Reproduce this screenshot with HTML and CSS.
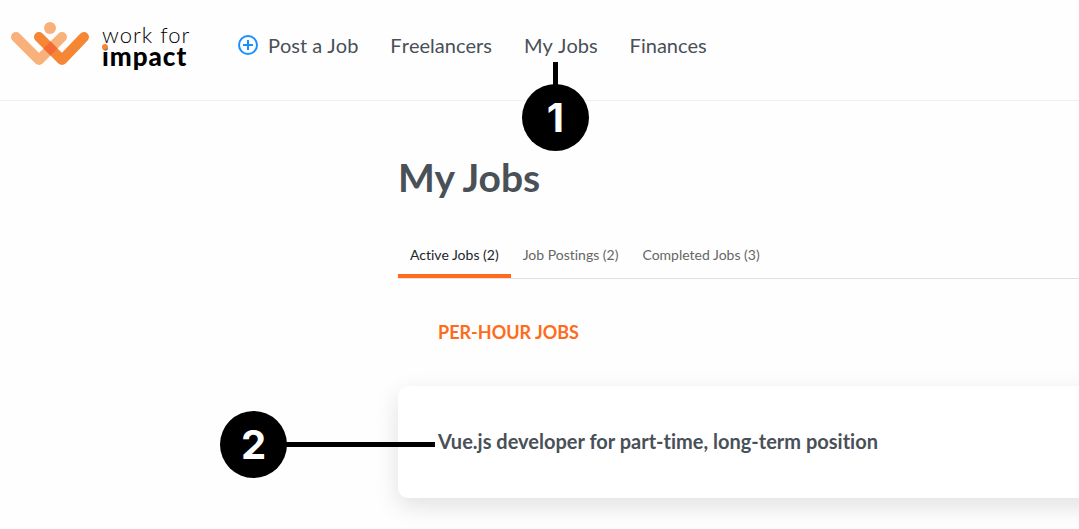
FILE: index.html
```html
<!DOCTYPE html>
<html lang="en">
<head>
    <meta charset="UTF-8">
    <meta name="viewport" content="width=device-width, initial-scale=1.0">
    <title>My Jobs - Work for Impact</title>
    <link rel="stylesheet" href="styles.css">
</head>
<body>
    <header class="header">
        <a class="logo" href="#">
            <svg class="logo-mark" width="80" height="46" viewBox="0 0 80 46" aria-hidden="true">
                <circle cx="40" cy="7" r="6" fill="#f9b17c"/>
                <path d="M6 16L29 39L52 16" fill="none" stroke="#f9b17c" stroke-width="10" stroke-linecap="round" stroke-linejoin="round"/>
                <path d="M29 16L52 39L74 16" fill="none" stroke="#f58634" stroke-width="10" stroke-linecap="round" stroke-linejoin="round"/>
                <path d="M40.500 20.500L47.500 27.500L40.500 34.500L33.500 27.500Z" fill="#f26b35"/>
            </svg>
            <span class="logo-text">
                <span class="logo-light">work for</span>
                <span class="logo-bold">impact</span>
            </span>
        </a>

        <nav class="nav">
            <a href="#">
                <svg width="20" height="20" viewBox="0 0 20 20" fill="none" stroke="#1890ff" stroke-width="2" aria-hidden="true">
                    <circle cx="10" cy="10" r="9"/>
                    <path d="M10 5V15M5 10H15"/>
                </svg>
                Post a Job
            </a>
            <a href="#">Freelancers</a>
            <a href="#" class="current">My Jobs<span class="marker marker-down">1</span></a>
            <a href="#">Finances</a>
        </nav>
    </header>

    <main class="content">
        <h1>My Jobs</h1>

        <div class="tabs" role="tablist">
            <button type="button" role="tab" class="tab active" aria-selected="true">Active Jobs (2)</button>
            <button type="button" role="tab" class="tab" aria-selected="false">Job Postings (2)</button>
            <button type="button" role="tab" class="tab" aria-selected="false">Completed Jobs (3)</button>
        </div>

        <h2>PER-HOUR JOBS</h2>

        <article class="job-card">
            <h3>Vue.js developer for part-time, long-term position</h3>
            <span class="marker marker-side">2</span>
        </article>
    </main>
</body>
</html>
```

FILE: styles.css
```css
* {
    box-sizing: border-box;
}

body {
    margin: 0;
    font-family: Lato, "Liberation Sans", sans-serif;
    font-variant-ligatures: none;
    color: #495057;
    background: #fefefe;
    overflow-x: hidden;
}

h1, h2, h3 {
    margin: 0;
}

a {
    color: inherit;
    text-decoration: none;
}

.header {
    display: flex;
    gap: 48px;
    height: 101px;
    padding: 20px 10px 0;
    border-bottom: 1px solid #f0f0f0;
}

/* Logo */
.logo {
    display: flex;
    gap: 12px;
    width: 180px;
}

.logo-mark {
    flex: none;
    margin-top: 1px;
}

.logo-text {
    display: flex;
    flex-direction: column;
    padding-top: 4px;
    line-height: 22px;
    color: #000;
    white-space: nowrap;
}

.logo-light {
    font-size: 22px;
    font-weight: 300;
    letter-spacing: 1px;
}

.logo-bold {
    position: relative;
    font-size: 26px;
    font-weight: 900;
    line-height: 20px;
    letter-spacing: 1px;
}

/* Orange dot on the "i" */
.logo-bold::before {
    content: "";
    position: absolute;
    top: -2px;
    left: 0;
    width: 6px;
    height: 6px;
    border-radius: 50%;
    background: #f58634;
}

/* Navigation */
.nav {
    display: flex;
    align-items: center;
    gap: 32px;
    height: 50px;
    font-size: 20px;
    font-kerning: none;
    white-space: nowrap;
}

.nav a {
    display: flex;
    align-items: center;
    gap: 10px;
}

.nav .current {
    position: relative;
}

/* Numbered markers */
.marker {
    position: absolute;
    display: flex;
    align-items: center;
    justify-content: center;
    width: 67px;
    height: 67px;
    border-radius: 50%;
    background: #000;
    color: #fff;
    font: bold 40px Inter, "Liberation Sans", sans-serif;
}

.marker::after {
    content: "";
    position: absolute;
    background: #000;
}

.marker-down {
    top: 51px;
    left: -2px;
}

.marker-down::after {
    bottom: 66px;
    left: 31px;
    width: 5px;
    height: 23px;
}

.marker-side {
    top: 25px;
    left: -178px;
}

.marker-side::after {
    top: 31px;
    left: 66px;
    width: 149px;
    height: 5px;
}

/* Content */
.content {
    padding: 52px 0 31px 398px;
    overflow: hidden;
}

h1 {
    font-size: 39px;
    line-height: 48px;
}

.tabs {
    display: flex;
    margin-top: 37px;
    border-bottom: 1px solid #dee2e6;
}

.tab {
    height: 40px;
    padding: 0 12px 4px;
    border: 0;
    border-bottom: 4px solid transparent;
    background: none;
    color: #666;
    font-family: inherit;
    font-size: 14px;
    font-variant-ligatures: none;
    cursor: pointer;
}

.tab.active {
    border-color: #ff6b1a;
    color: #212529;
}

h2 {
    margin: 41px 0 42px 40px;
    color: #ff6b1a;
    font-size: 18px;
    line-height: 24px;
}

/* Card runs past the right edge */
.job-card {
    position: relative;
    margin-right: -40px;
    padding: 43px 40px 45px;
    border-radius: 10px;
    background: #fff;
    box-shadow: 0 8px 24px rgba(0, 0, 0, 0.12);
}

h3 {
    font-size: 20px;
    line-height: 24px;
}
```
